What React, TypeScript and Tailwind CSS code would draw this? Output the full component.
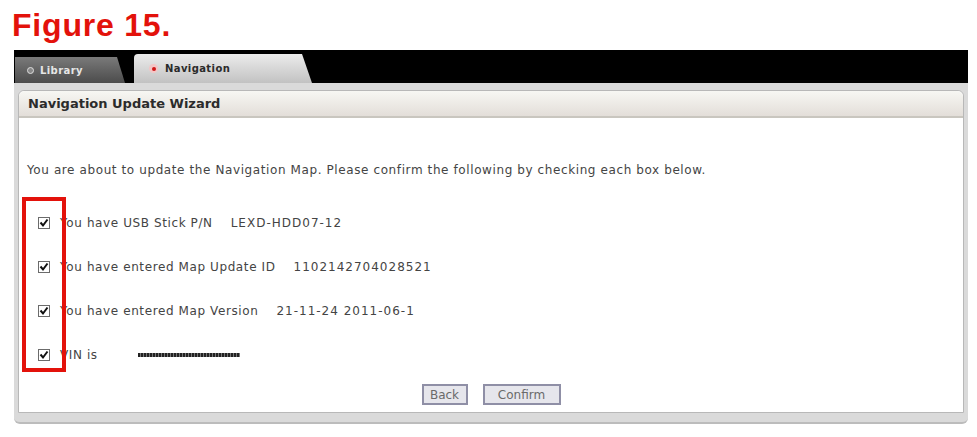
import React from 'react'

const rows = [
  { label: 'You have USB Stick P/N', value: 'LEXD-HDD07-12' },
  { label: 'You have entered Map Update ID', value: '1102142704028521' },
  { label: 'You have entered Map Version', value: '21-11-24 2011-06-1' },
]

function CheckBox() {
  return (
    <svg width="12" height="12" viewBox="0 0 12 12" className="shrink-0">
      <rect x="0.5" y="0.5" width="11" height="11" fill="#fff" stroke="#6b6b6b" />
      <path d="M2.5 5.5 L5 8.5 L9.5 2.5" fill="none" stroke="#111" strokeWidth="2" />
    </svg>
  )
}

export default function App() {
  return (
    <div className="relative w-[977px] h-[437px] overflow-hidden bg-white font-['DejaVu_Sans',Verdana,sans-serif]">
      <div className="h-[50px] pl-[12px] pt-[9px] font-['Liberation_Sans',Arial,sans-serif] text-[32px] font-bold leading-none tracking-[0.8px] text-[#e3120b]">
        Figure 15.
      </div>

      <div className="ml-[14px] w-[954px]">
        {/* tab bar */}
        <div className="flex h-[33px] items-end gap-[9px] bg-black pl-[1px]">
          <div className="flex h-[26px] w-[110px] items-center gap-[6px] bg-gradient-to-b from-[#7a7a7a] to-[#4c4c4c] pl-[12px] [clip-path:polygon(0_0,102px_0,110px_100%,0_100%)]">
            <span className="h-[7px] w-[7px] rounded-full border border-[#ddd] bg-[#888]" />
            <span className="text-[10px] font-bold tracking-[0.4px] text-[#e6e6e6]">Library</span>
          </div>
          <div className="flex h-[29px] w-[178px] items-center gap-[7px] rounded-t-[4px] bg-gradient-to-b from-[#ececec] to-[#c2c2c2] pl-[15px] [clip-path:polygon(0_0,168px_0,178px_100%,0_100%)]">
            <span className="flex h-[9px] w-[9px] items-center justify-center rounded-full bg-[#f3c6c6]">
              <span className="h-[4px] w-[4px] rounded-full bg-[#d01818]" />
            </span>
            <span className="text-[10px] font-bold tracking-[0.4px] text-[#2a2a2a]">Navigation</span>
          </div>
        </div>

        {/* panel frame */}
        <div className="rounded-b-[6px] border-b-2 border-[#bcbcbc] bg-[#dadada] px-[4px] pt-[7px] pb-[9px]">
          <div className="rounded-t-[6px] border border-[#b8b8b8] bg-white">
            <div className="flex h-[27px] items-center rounded-t-[6px] border-b-2 border-[#c9c6bf] bg-gradient-to-b from-[#f7f7f3] to-[#e3ded9] pl-[9px]">
              <span className="text-[13px] font-bold text-[#2b2b2b]">Navigation Update Wizard</span>
            </div>

            <div className="pl-[8px] pt-[45px] text-[12px] tracking-[0.6px] text-[#444]">
              <p className="leading-[14px]">
                You are about to update the Navigation Map. Please confirm the following by checking each box below.
              </p>

              <div className="mt-[39px] flex flex-col gap-[30px] pl-[11px]">
                {rows.map((r) => (
                  <div key={r.label} className="flex h-[14px] items-center gap-[10px]">
                    <CheckBox />
                    <span>{r.label}</span>
                    <span className="ml-[8px] tracking-[1px]">{r.value}</span>
                  </div>
                ))}
                <div className="flex h-[14px] items-center gap-[10px]">
                  <CheckBox />
                  <span>VIN is</span>
                  <span className="ml-[30px] h-[4px] w-[102px] bg-[repeating-linear-gradient(90deg,#222_0,#222_2px,#777_2px,#777_3px)]" />
                </div>
              </div>

              <div className="mt-[22px] flex justify-center gap-[15px] pb-[7px] pr-[8px]">
                <button className="h-[21px] w-[46px] border-2 border-[#8f8fa6] bg-[#e6e6ec] text-[12px] tracking-normal text-[#6a6a6a]">
                  Back
                </button>
                <button className="h-[21px] w-[78px] border-2 border-[#8f8fa6] bg-[#e6e6ec] text-[12px] tracking-normal text-[#6a6a6a]">
                  Confirm
                </button>
              </div>
            </div>
          </div>
        </div>
      </div>

      {/* annotation box */}
      <div className="absolute left-[22px] top-[197px] h-[175px] w-[44px] border-[4px] border-[#e3120b]" />
    </div>
  )
}
